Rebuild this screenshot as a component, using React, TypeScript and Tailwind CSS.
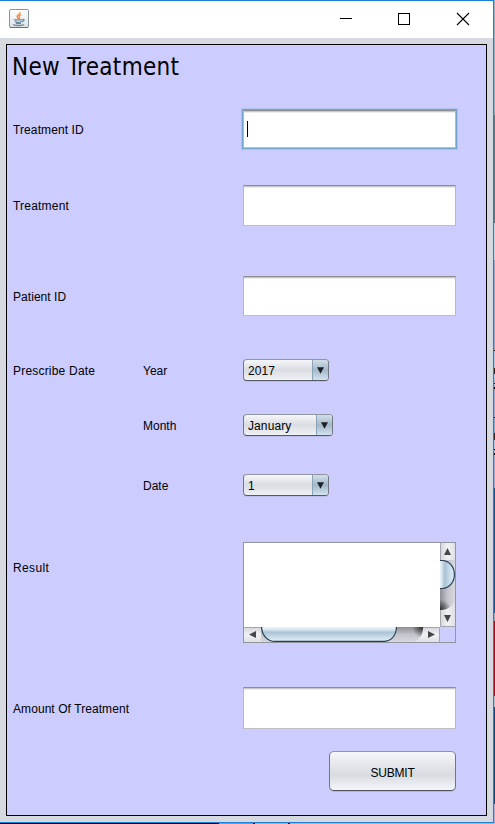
import React from 'react';

const labelFont = "font-['Liberation_Sans',Arial,sans-serif] text-[12px] leading-[14px] text-black whitespace-nowrap";

function JavaIcon() {
  return (
    <svg width="20" height="19" viewBox="0 0 20 19" className="block">
      <defs>
        <linearGradient id="jbg" x1="0" y1="0" x2="0" y2="1">
          <stop offset="0" stopColor="#ffffff" />
          <stop offset="1" stopColor="#dde2e7" />
        </linearGradient>
      </defs>
      <rect x="0.5" y="0.5" width="19" height="18" rx="1.5" fill="url(#jbg)" stroke="#8596a5" />
      <path d="M1 18.5H19" stroke="#5d7388" />
      <path d="M11 3.2C11.6 5.2 7.8 6 8.2 7.8C8.4 8.8 9.4 9.2 9.4 10.2M12 5.8C10.4 6.6 9.8 7.4 10.4 8.4C10.8 9.2 10.4 9.8 9.8 10.2" fill="none" stroke="#ee8b3e" strokeWidth="1.4" />
      <path d="M4.8 10.8H13M6 12.6C8 13.6 11 13.5 12.8 12.5M13.2 10.6C15.8 10 15.6 12.4 13 12.7M7 14.5H12" fill="none" stroke="#6b8aa5" strokeWidth="1.3" />
      <path d="M4 15.5C6.5 17 12.5 17 15 15.4" fill="none" stroke="#6b8aa5" strokeWidth="1.2" />
    </svg>
  );
}

function TitleBar() {
  return (
    <div className="flex h-[37px] shrink-0 items-start bg-white">
      <div className="pt-2 pl-[9px]"><JavaIcon /></div>
      <svg width="131" height="37" viewBox="0 0 131 37" className="mr-[23px] ml-auto block" fill="none" stroke="#000" shapeRendering="crispEdges">
        <path d="M1 17.5H13" />
        <rect x="59.5" y="12.5" width="11" height="11" />
        <path d="M118 12L130 24M130 12L118 24" shapeRendering="auto" strokeWidth="1.1" />
      </svg>
    </div>
  );
}

function Field({ className, focused = false }: { className: string; focused?: boolean }) {
  return (
    <div className={`${className} w-[213px] border border-x-[#b8b8bc] border-t-[#8d8d91] border-b-[#c0c0c4] bg-white ${focused ? 'shadow-[0_0_0_1px_#73a4d1,0_0_0_2px_#b0c3ee]' : ''}`}>
      <div className="h-px bg-[#c8c8c8]" />
      <div className="h-px bg-[#ececec]" />
      {focused && <div className="mt-[8px] ml-[3px] h-4 w-px bg-black" />}
    </div>
  );
}

function Combo({ value, className }: { value: string; className: string }) {
  return (
    <div className={`${className} flex h-[22px] overflow-hidden rounded-[4px] border border-x-[#747782] border-t-[#92949f] border-b-[#565964] bg-linear-to-b from-[#f6f7f9] via-[#d9dce2] to-[#f0f2f5] shadow-[0_1px_0_#bdbdea]`}>
      <div className={`${labelFont} flex-1 pt-[4px] pl-1 tracking-[0.1px]`}>{value}</div>
      <div className="flex w-4 items-center justify-center border-l border-[#8ba3b6] bg-linear-to-b from-[#d2dfe9] via-[#a3b8c9] to-[#d3e3ee]">
        <svg width="7" height="7" viewBox="0 0 7 7"><path d="M0 0.3H7L3.5 6.8Z" fill="#1d2024" /></svg>
      </div>
    </div>
  );
}

function ScrollArea() {
  return (
    <div className="grid h-[101px] w-[213px] grid-cols-[196px_15px] grid-rows-[84px_15px] border border-[#9295a0]">
      <div className="bg-white" />
      <svg width="15" height="84" viewBox="0 0 15 84" className="block">
        <defs>
          <linearGradient id="vt"><stop offset="0" stopColor="#8d8f96" /><stop offset=".5" stopColor="#c3c5cb" /><stop offset="1" stopColor="#d6d8dd" /></linearGradient>
          <linearGradient id="vb"><stop offset="0" stopColor="#d2d5da" /><stop offset=".5" stopColor="#f0f1f3" /><stop offset="1" stopColor="#dfe1e5" /></linearGradient>
          <linearGradient id="vth"><stop offset="0" stopColor="#f4fafd" /><stop offset=".2" stopColor="#d5e4ef" /><stop offset=".35" stopColor="#abc2d5" /><stop offset="1" stopColor="#e0f2fb" /></linearGradient>
          <radialGradient id="vs" gradientUnits="userSpaceOnUse" cx="0" cy="67" r="11"><stop offset="0" stopColor="#222" stopOpacity=".9" /><stop offset="1" stopColor="#222" stopOpacity="0" /></radialGradient>
        </defs>
        <rect width="15" height="84" fill="url(#vb)" />
        <path d="M0 17H15V57Q12 66 2 67H0Z" fill="url(#vt)" />
        <path d="M0 45H15V57Q12 66 2 67H0Z" fill="url(#vs)" />
        <path d="M-1 17.5H2C18.5 18 18.5 45 2 45.5H-1Z" fill="url(#vth)" stroke="#263f56" strokeWidth="1.2" />
        <path d="M0.5 0V17M0.5 67V83.5H15" fill="none" stroke="#a4a6ad" />
        <path d="M4 12H11L7.5 5Z M4 72H11L7.5 79Z" fill="#44464a" />
      </svg>
      <svg width="196" height="15" viewBox="0 0 196 15" className="block">
        <defs>
          <linearGradient id="ht" x1="0" y1="0" x2="0" y2="1"><stop offset="0" stopColor="#8d8f96" /><stop offset=".5" stopColor="#c3c5cb" /><stop offset="1" stopColor="#d6d8dd" /></linearGradient>
          <linearGradient id="hb" x1="0" y1="0" x2="0" y2="1"><stop offset="0" stopColor="#d2d5da" /><stop offset=".5" stopColor="#f0f1f3" /><stop offset="1" stopColor="#dfe1e5" /></linearGradient>
          <linearGradient id="hth" x1="0" y1="0" x2="0" y2="1"><stop offset="0" stopColor="#f6fbfd" /><stop offset=".25" stopColor="#d5e4ef" /><stop offset=".4" stopColor="#abc2d5" /><stop offset="1" stopColor="#e0f2fb" /></linearGradient>
          <radialGradient id="hs" gradientUnits="userSpaceOnUse" cx="179" cy="0" r="11"><stop offset="0" stopColor="#222" stopOpacity=".9" /><stop offset="1" stopColor="#222" stopOpacity="0" /></radialGradient>
        </defs>
        <rect width="196" height="15" fill="url(#hb)" />
        <path d="M17 0H179V2Q178 12 170 15H17Z" fill="url(#ht)" />
        <path d="M150 0H179V2Q178 12 170 15H150Z" fill="url(#hs)" />
        <path d="M17.5 -1V0C18 9 24 14.4 31 14.4H139C147 14.4 152 9 152.5 0V-1Z" fill="url(#hth)" stroke="#263f56" strokeWidth="1.2" />
        <path d="M0 0.5H17M179 0.5H195.5V15" fill="none" stroke="#a4a6ad" />
        <path d="M12 4V11L5 7.5Z M184 4V11L191 7.5Z" fill="#44464a" />
      </svg>
      <div className="bg-[#ccccff]" />
    </div>
  );
}

function Row({ label, sub, height, textTop, labelClass = '', children }: { label?: string; sub?: string; height: string; textTop: string; labelClass?: string; children: React.ReactNode }) {
  return (
    <div className={`grid shrink-0 grid-cols-[130px_100px_213px] items-start pl-1.5 ${height}`}>
      <div className={`${labelFont} ${textTop} ${labelClass}`}>{label}</div>
      <div className={`${labelFont} ${textTop}`}>{sub}</div>
      <div>{children}</div>
    </div>
  );
}

export default function App() {
  return (
    <div className="flex h-[824px] w-[495px] flex-col overflow-hidden">
      <div className="flex h-[823px] shrink-0">
        <div className="flex w-[494px] flex-col border-t border-r border-b border-[#1a80d9] bg-[#d6d9df]">
          <TitleBar />
          <div className="mt-1.5 ml-1.5 flex h-[772px] w-[481px] flex-col border border-black bg-[#ccccff]">
            <h1 className="h-[60px] shrink-0 pt-[7px] pl-[5px] font-['DejaVu_Sans_Condensed','DejaVu_Sans',sans-serif] text-[24px] leading-[30px] font-normal tracking-[0.3px] whitespace-nowrap text-black">New Treatment</h1>
            <Row label="Treatment ID" height="h-[75px]" textTop="pt-[18px]" labelClass="tracking-[0.1px]"><Field focused className="mt-[5px] h-[38px]" /></Row>
            <Row label="Treatment" height="h-[91px]" textTop="pt-[19px]" labelClass="tracking-[0.2px]"><Field className="mt-[5px] h-[41px]" /></Row>
            <Row label="Patient ID" height="h-[83px]" textTop="pt-[19px]" labelClass="tracking-[0.05px]"><Field className="mt-[5px] h-[40px]" /></Row>
            <Row label="Prescribe Date" sub="Year" height="h-[55px]" textTop="pt-[10px]" labelClass="tracking-[0.2px]"><Combo value="2017" className="mt-[5px] w-[86px]" /></Row>
            <Row sub="Month" height="h-[60px]" textTop="pt-[10px]"><Combo value="January" className="mt-[5px] w-[90px]" /></Row>
            <Row sub="Date" height="h-[68px]" textTop="pt-[10px]"><Combo value="1" className="mt-[5px] w-[86px]" /></Row>
            <Row label="Result" height="h-[145px]" textTop="pt-[24px]" labelClass="tracking-[0.35px]"><div className="pt-[5px]"><ScrollArea /></div></Row>
            <Row label="Amount Of Treatment" height="h-[69px]" textTop="pt-[20px]" labelClass="tracking-[0.07px]"><Field className="mt-[5px] h-[42px]" /></Row>
            <button className={`${labelFont} ml-[322px] h-[40px] w-[127px] shrink-0 rounded-[5px] border border-x-[#747782] border-t-[#92949f] border-b-[#50535d] bg-linear-to-b from-[#f5f6f8] via-[#d8dbe1] via-60% to-[#f4f6f9] pt-[3px] tracking-[-0.2px] shadow-[0_1px_0_#b6b6dc]`}>SUBMIT</button>
          </div>
        </div>
        <div className="flex w-px flex-col">
          <div className="h-[115px] bg-[#86b4cc]" />
          <div className="h-[108px] bg-[#53778c]" />
          <div className="h-[37px] bg-[#b5dcf5]" />
          <div className="h-[90px] bg-[#8aa9d8]" />
          <div className="h-px bg-black" />
          <div className="h-[17px] bg-[#9dc7f0]" />
          <div className="h-[6px] bg-[#3d2418]" />
          <div className="h-[9px] bg-[#9dc7f0]" />
          <div className="h-px bg-black" />
          <div className="h-[3px] bg-[#9dc7f0]" />
          <div className="h-[2px] bg-black" />
          <div className="h-[28px] bg-[#92a9e0]" />
          <div className="h-px bg-black" />
          <div className="h-[15px] bg-[#76aee5]" />
          <div className="h-[7px] bg-[#3d2418]" />
          <div className="h-[9px] bg-[#9dc7f0]" />
          <div className="h-px bg-black" />
          <div className="h-[3px] bg-[#9dc7f0]" />
          <div className="h-[2px] bg-black" />
          <div className="h-[33px] bg-[#92a9e0]" />
          <div className="h-[125px] bg-[#07559d]" />
          <div className="h-[8px] bg-[#8ca9c2]" />
          <div className="h-[75px] bg-[#b10710]" />
          <div className="h-[11px] bg-[#a8c2d8]" />
          <div className="h-[97px] bg-[#07488c]" />
          <div className="flex-1 bg-[#a4aee5]" />
        </div>
      </div>
      <div className="flex h-px">
        <div className="w-[219px] bg-black" />
        <div className="w-[34px] bg-[#739bc0]" />
        <div className="w-[2px] bg-black" />
        <div className="w-[33px] bg-[#9bb2e0]" />
        <div className="w-[2px] bg-black" />
        <div className="flex-1 bg-[#a9b0e8]" />
      </div>
    </div>
  );
}
